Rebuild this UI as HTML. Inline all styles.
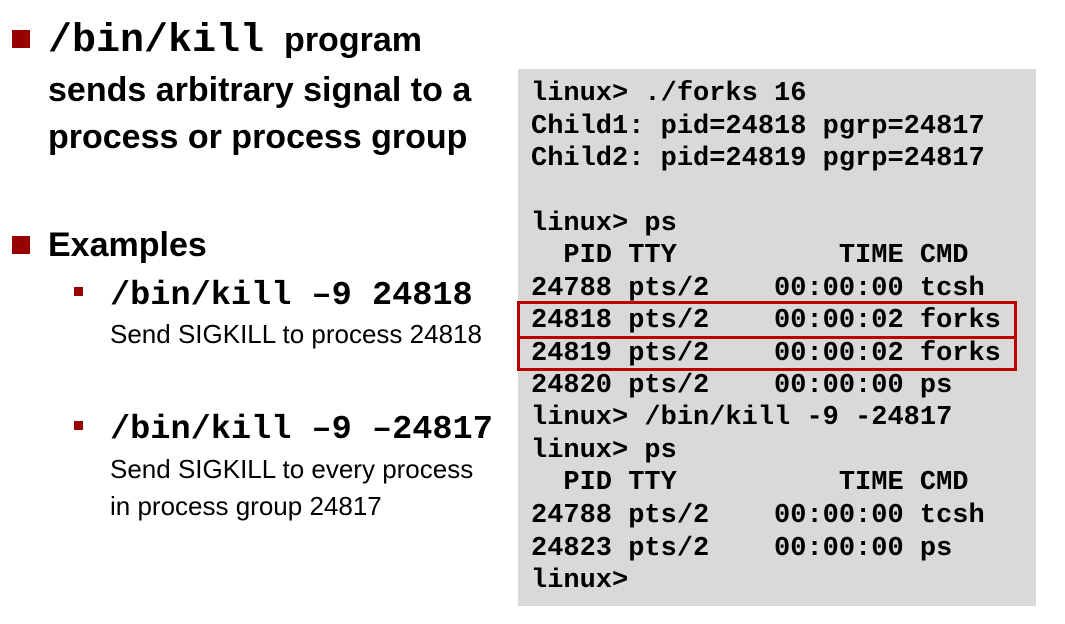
<!DOCTYPE html>
<html><head><meta charset="utf-8"><style>
body{margin:0;width:1065px;height:624px;background:#fff;position:relative;overflow:hidden;font-family:"Liberation Sans",sans-serif;color:#000}
.a{position:absolute;white-space:pre}
.m{font-family:"Liberation Mono",monospace;font-weight:bold}
.t{font-weight:bold;font-size:34px;height:48px;line-height:48px}
.s{font-size:26px;height:36px;line-height:36px}
.sq{position:absolute;background:#990000}
#term{position:absolute;left:518px;top:69px;width:518px;height:537px;background:#d9d9d9}
.tl{position:absolute;left:13px;font-family:"Liberation Mono",monospace;font-weight:bold;font-size:27px;height:32px;line-height:32px;white-space:pre}
.box{position:absolute;border:3px solid #c00000;box-sizing:border-box}
</style></head><body>
<div class="sq" style="left:12px;top:30px;width:18px;height:18px"></div>
<div class="a t" style="left:48px;top:16px"><span class="m" style="font-size:40px">/bin/kill</span><span style="margin-left:20px">program</span></div>
<div class="a t" style="left:48px;top:66px">sends arbitrary signal to a</div>
<div class="a t" style="left:48px;top:113px">process or process group</div>
<div class="sq" style="left:12px;top:236px;width:18px;height:18px"></div>
<div class="a t" style="left:48px;top:221px">Examples</div>
<div class="sq" style="left:74px;top:287px;width:9px;height:9px"></div>
<div class="a m" style="left:110px;top:276px;font-size:33.6px;line-height:40px">/bin/kill –9 24818</div>
<div class="a s" style="left:110px;top:316px">Send SIGKILL to process 24818</div>
<div class="sq" style="left:74px;top:421px;width:9px;height:9px"></div>
<div class="a m" style="left:110px;top:410px;font-size:33.6px;line-height:40px">/bin/kill –9 –24817</div>
<div class="a s" style="left:110px;top:451px">Send SIGKILL to every process</div>
<div class="a s" style="left:110px;top:488px">in process group 24817</div>
<div id="term">
<div class="tl" style="top:9px">linux&gt; ./forks 16</div>
<div class="tl" style="top:42px">Child1: pid=24818 pgrp=24817</div>
<div class="tl" style="top:74px">Child2: pid=24819 pgrp=24817</div>
<div class="tl" style="top:139px">linux&gt; ps</div>
<div class="tl" style="top:171px">  PID TTY          TIME CMD</div>
<div class="tl" style="top:204px">24788 pts/2    00:00:00 tcsh</div>
<div class="tl" style="top:236px">24818 pts/2    00:00:02 forks</div>
<div class="tl" style="top:269px">24819 pts/2    00:00:02 forks</div>
<div class="tl" style="top:301px">24820 pts/2    00:00:00 ps</div>
<div class="tl" style="top:333px">linux&gt; /bin/kill -9 -24817</div>
<div class="tl" style="top:366px">linux&gt; ps</div>
<div class="tl" style="top:398px">  PID TTY          TIME CMD</div>
<div class="tl" style="top:431px">24788 pts/2    00:00:00 tcsh</div>
<div class="tl" style="top:464px">24823 pts/2    00:00:00 ps</div>
<div class="tl" style="top:496px">linux&gt;</div>
</div>
<div class="box" style="left:517px;top:301px;width:500px;height:38px"></div>
<div class="box" style="left:517px;top:336px;width:500px;height:35px"></div>
</body></html>
